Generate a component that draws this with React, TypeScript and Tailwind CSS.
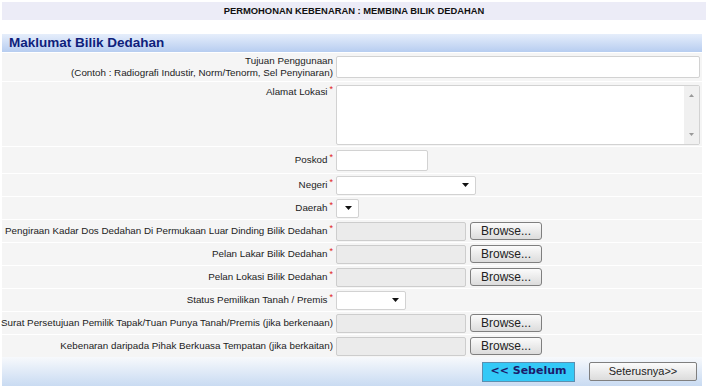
import React from "react";

const Star = () => <span className="text-[#e0201a] text-[9px] relative -top-[3px] ml-[2px]">*</span>;

const Arrow = () => (
  <svg width="7" height="4" viewBox="0 0 7 4" className="block">
    <polygon points="0,0 7,0 3.5,4" fill="#111" />
  </svg>
);

const Select = ({ w }: { w: string }) => (
  <div className={`${w} h-[19px] bg-white border border-[#d2d2d2] rounded-[2px] flex items-center justify-end pr-[6px]`}>
    <Arrow />
  </div>
);

const FileInput = () => (
  <div className="flex items-center gap-[4px]">
    <div className="w-[130px] h-[19px] bg-[#ebebeb] border border-[#cdcdcd] rounded-[2px]" />
    <button className="w-[72px] h-[18px] rounded-[3px] border border-[#7f7f7f] bg-gradient-to-b from-[#fbfbfb] to-[#dcdcdc] text-[12px] leading-none text-[#222] flex items-center justify-center">
      Browse...
    </button>
  </div>
);

const Row = ({
  label,
  req,
  h,
  children,
  top,
}: {
  label: React.ReactNode;
  req?: boolean;
  h: string;
  children: React.ReactNode;
  top?: boolean;
}) => (
  <div className={`flex ${h} bg-[#f5f5f5] border-t border-white`}>
    <div className={`w-[334px] shrink-0 flex justify-end pr-[3px] text-right ${top ? "items-start pt-[4px]" : "items-center"}`}>
      <div className="leading-[12px] whitespace-nowrap">
        {label}
        {req && <Star />}
      </div>
    </div>
    <div className={`flex-1 flex ${top ? "items-start pt-[2px]" : "items-center"}`}>{children}</div>
  </div>
);

export default function App() {
  return (
    <div className="w-[708px] h-[389px] bg-white text-[#222] text-[9.8px]" style={{ fontFamily: '"Liberation Sans", Arial, sans-serif' }}>
      <div className="pt-[2px] px-[2px]">
        <div className="h-[18px] bg-[#ececf7] flex items-center justify-center font-bold text-[9.4px] text-[#111]">
          PERMOHONAN KEBENARAN : MEMBINA BILIK DEDAHAN
        </div>
      </div>
      <div className="mt-[14px] ml-[2px] w-[700px]">
        <div className="h-[18px] bg-gradient-to-b from-[#e6eefb] to-[#b7cdf0] flex items-center pl-[7px] font-bold text-[13.5px] text-[#0f1f7c]">
          Maklumat Bilik Dedahan
        </div>
        <Row
          h="h-[29px]"
          label={
            <>
              Tujuan Penggunaan
              <br />
              (Contoh : Radiografi Industir, Norm/Tenorm, Sel Penyinaran)
            </>
          }
        >
          <div className="w-[364px] h-[22px] bg-white border border-[#d2d2d2] rounded-[2px]" />
        </Row>
        <Row h="h-[65px]" label="Alamat Lokasi" req top>
          <div className="w-[364px] h-[60px] bg-white border border-[#d2d2d2] rounded-[2px] flex justify-end mt-[1px]">
            <div className="w-[15px] h-full bg-[#f0f0f0] flex flex-col items-center justify-between py-[8px]">
              <svg width="5" height="3" viewBox="0 0 5 3"><polygon points="0,3 5,3 2.5,0" fill="#999" /></svg>
              <svg width="5" height="3" viewBox="0 0 5 3"><polygon points="0,0 5,0 2.5,3" fill="#999" /></svg>
            </div>
          </div>
        </Row>
        <Row h="h-[27px]" label="Poskod" req>
          <div className="w-[92px] h-[21px] bg-white border border-[#d2d2d2] rounded-[2px]" />
        </Row>
        <Row h="h-[23px]" label="Negeri" req>
          <Select w="w-[140px]" />
        </Row>
        <Row h="h-[23px]" label="Daerah" req>
          <Select w="w-[23px]" />
        </Row>
        <Row h="h-[23px]" label="Pengiraan Kadar Dos Dedahan Di Permukaan Luar Dinding Bilik Dedahan" req>
          <FileInput />
        </Row>
        <Row h="h-[23px]" label="Pelan Lakar Bilik Dedahan" req>
          <FileInput />
        </Row>
        <Row h="h-[23px]" label="Pelan Lokasi Bilik Dedahan" req>
          <FileInput />
        </Row>
        <Row h="h-[23px]" label="Status Pemilikan Tanah / Premis" req>
          <Select w="w-[70px]" />
        </Row>
        <Row h="h-[23px]" label="Surat Persetujuan Pemilik Tapak/Tuan Punya Tanah/Premis (jika berkenaan)">
          <FileInput />
        </Row>
        <Row h="h-[23px]" label="Kebenaran daripada Pihak Berkuasa Tempatan (jika berkaitan)">
          <FileInput />
        </Row>
        <div className="h-[29px] bg-gradient-to-b from-[#f7f9fc] to-[#c9dbf2] flex items-center justify-end pr-[5px] gap-[14px]">
          <button
            className="w-[93px] h-[20px] bg-[#33c9f7] border border-[#5a8fb0] text-[#1b1b6b] font-bold text-[11px] flex items-center justify-center"
            style={{ fontFamily: '"DejaVu Sans", Verdana, sans-serif' }}
          >
            &lt;&lt; Sebelum
          </button>
          <button className="w-[108px] h-[19px] rounded-[2px] border border-[#7f7f7f] bg-gradient-to-b from-[#fbfbfb] to-[#dcdcdc] text-[11px] text-[#222] flex items-center justify-center">
            Seterusnya&gt;&gt;
          </button>
        </div>
      </div>
    </div>
  );
}
